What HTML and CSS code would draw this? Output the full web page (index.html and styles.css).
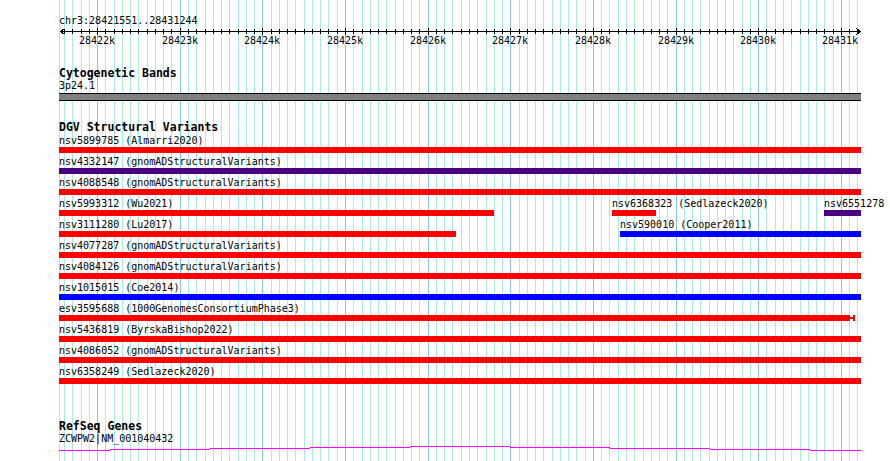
FILE: index.html
```html
<!DOCTYPE html>
<html>
<head>
<meta charset="utf-8">
<title>chr3:28421551..28431244</title>
<link rel="stylesheet" href="styles.css">
</head>
<body>
<div class="browser">

  <!-- guide lines every 100bp, darker every 1kb -->
  <svg class="grid" width="890" height="461">
    <path class="minor" d="M59.5 0V461M64.5 0V461M72.5 0V461M81.5 0V461M89.5 0V461M105.5 0V461M114.5 0V461M122.5 0V461M130.5 0V461M138.5 0V461M147.5 0V461M155.5 0V461M163.5 0V461M171.5 0V461M188.5 0V461M196.5 0V461M205.5 0V461M213.5 0V461M221.5 0V461M229.5 0V461M238.5 0V461M246.5 0V461M254.5 0V461M271.5 0V461M279.5 0V461M287.5 0V461M295.5 0V461M304.5 0V461M312.5 0V461M320.5 0V461M328.5 0V461M337.5 0V461M353.5 0V461M362.5 0V461M370.5 0V461M378.5 0V461M386.5 0V461M395.5 0V461M403.5 0V461M411.5 0V461M419.5 0V461M436.5 0V461M444.5 0V461M452.5 0V461M461.5 0V461M469.5 0V461M477.5 0V461M486.5 0V461M494.5 0V461M502.5 0V461M519.5 0V461M527.5 0V461M535.5 0V461M543.5 0V461M552.5 0V461M560.5 0V461M568.5 0V461M576.5 0V461M585.5 0V461M601.5 0V461M609.5 0V461M618.5 0V461M626.5 0V461M634.5 0V461M643.5 0V461M651.5 0V461M659.5 0V461M667.5 0V461M684.5 0V461M692.5 0V461M700.5 0V461M709.5 0V461M717.5 0V461M725.5 0V461M733.5 0V461M742.5 0V461M750.5 0V461M766.5 0V461M775.5 0V461M783.5 0V461M791.5 0V461M800.5 0V461M808.5 0V461M816.5 0V461M824.5 0V461M833.5 0V461M849.5 0V461M857.5 0V461"/>
    <path class="major" d="M97.5 0V461M180.5 0V461M262.5 0V461M345.5 0V461M428.5 0V461M510.5 0V461M593.5 0V461M676.5 0V461M758.5 0V461M841.5 0V461"/>
  </svg>

  <div class="view">
    <div class="ruler">
      <div class="locus">chr3:28421551..28431244</div>
      <svg class="scale" width="890" height="40">
        <path class="axis" d="M60 4.5H861M64.5 1.5L60.5 4.5L64.5 7.5M856.5 1.5L860.5 4.5L856.5 7.5"/>
        <path class="axis" d="M64.5 2V7M72.5 2V7M81.5 2V7M89.5 2V7M105.5 2V7M114.5 2V7M122.5 2V7M130.5 2V7M138.5 2V7M147.5 2V7M155.5 2V7M163.5 2V7M171.5 2V7M188.5 2V7M196.5 2V7M205.5 2V7M213.5 2V7M221.5 2V7M229.5 2V7M238.5 2V7M246.5 2V7M254.5 2V7M271.5 2V7M279.5 2V7M287.5 2V7M295.5 2V7M304.5 2V7M312.5 2V7M320.5 2V7M328.5 2V7M337.5 2V7M353.5 2V7M362.5 2V7M370.5 2V7M378.5 2V7M386.5 2V7M395.5 2V7M403.5 2V7M411.5 2V7M419.5 2V7M436.5 2V7M444.5 2V7M452.5 2V7M461.5 2V7M469.5 2V7M477.5 2V7M486.5 2V7M494.5 2V7M502.5 2V7M519.5 2V7M527.5 2V7M535.5 2V7M543.5 2V7M552.5 2V7M560.5 2V7M568.5 2V7M576.5 2V7M585.5 2V7M601.5 2V7M609.5 2V7M618.5 2V7M626.5 2V7M634.5 2V7M643.5 2V7M651.5 2V7M659.5 2V7M667.5 2V7M684.5 2V7M692.5 2V7M700.5 2V7M709.5 2V7M717.5 2V7M725.5 2V7M733.5 2V7M742.5 2V7M750.5 2V7M766.5 2V7M775.5 2V7M783.5 2V7M791.5 2V7M800.5 2V7M808.5 2V7M816.5 2V7M824.5 2V7M833.5 2V7M849.5 2V7M857.5 2V7"/>
        <path class="axis" d="M97.5 1V8M180.5 1V8M262.5 1V8M345.5 1V8M428.5 1V8M510.5 1V8M593.5 1V8M676.5 1V8M758.5 1V8M841.5 1V8"/>
        <text x="97" y="17">28422k</text>
        <text x="180" y="17">28423k</text>
        <text x="262" y="17">28424k</text>
        <text x="345" y="17">28425k</text>
        <text x="428" y="17">28426k</text>
        <text x="510" y="17">28427k</text>
        <text x="593" y="17">28428k</text>
        <text x="676" y="17">28429k</text>
        <text x="758" y="17">28430k</text>
        <text x="840" y="17">28431k</text>
      </svg>
    </div>

    <section class="track cyto">
      <h2 class="track-title">Cytogenetic Bands</h2>
      <div class="band-name">3p24.1</div>
      <div class="band"></div>
    </section>

    <section class="track dgv">
      <h2 class="track-title">DGV Structural Variants</h2>
      <div class="rows">
        <div class="row">
          <div class="feature" style="left:59px;width:802px"><span class="name">nsv5899785 (Almarri2020)</span><div class="bar loss"></div></div>
        </div>
        <div class="row">
          <div class="feature" style="left:59px;width:802px"><span class="name">nsv4332147 (gnomADStructuralVariants)</span><div class="bar both"></div></div>
        </div>
        <div class="row">
          <div class="feature" style="left:59px;width:802px"><span class="name">nsv4088548 (gnomADStructuralVariants)</span><div class="bar loss"></div></div>
        </div>
        <div class="row">
          <div class="feature" style="left:59px;width:435px"><span class="name">nsv5993312 (Wu2021)</span><div class="bar loss"></div></div>
          <div class="feature" style="left:612px;width:44px"><span class="name">nsv6368323 (Sedlazeck2020)</span><div class="bar loss"></div></div>
          <div class="feature" style="left:824px;width:37px"><span class="name">nsv6551278</span><div class="bar both"></div></div>
        </div>
        <div class="row">
          <div class="feature" style="left:59px;width:397px"><span class="name">nsv3111280 (Lu2017)</span><div class="bar loss"></div></div>
          <div class="feature" style="left:620px;width:241px"><span class="name">nsv590010 (Cooper2011)</span><div class="bar gain"></div></div>
        </div>
        <div class="row">
          <div class="feature" style="left:59px;width:802px"><span class="name">nsv4077287 (gnomADStructuralVariants)</span><div class="bar loss"></div></div>
        </div>
        <div class="row">
          <div class="feature" style="left:59px;width:802px"><span class="name">nsv4084126 (gnomADStructuralVariants)</span><div class="bar loss"></div></div>
        </div>
        <div class="row">
          <div class="feature" style="left:59px;width:802px"><span class="name">nsv1015015 (Coe2014)</span><div class="bar gain"></div></div>
        </div>
        <div class="row">
          <div class="feature" style="left:59px;width:796px">
            <span class="name">esv3595688 (1000GenomesConsortiumPhase3)</span>
            <div class="ranged">
              <div class="bar loss" style="width:791px"></div>
              <div class="whisker"></div>
              <div class="cap"></div>
            </div>
          </div>
        </div>
        <div class="row">
          <div class="feature" style="left:59px;width:802px"><span class="name">nsv5436819 (ByrskaBishop2022)</span><div class="bar loss"></div></div>
        </div>
        <div class="row">
          <div class="feature" style="left:59px;width:802px"><span class="name">nsv4086052 (gnomADStructuralVariants)</span><div class="bar loss"></div></div>
        </div>
        <div class="row">
          <div class="feature" style="left:59px;width:802px"><span class="name">nsv6358249 (Sedlazeck2020)</span><div class="bar loss"></div></div>
        </div>
      </div>
    </section>

    <section class="track genes">
      <h2 class="track-title">RefSeq Genes</h2>
      <div class="gene">
        <span class="name">ZCWPW2|NM_001040432</span>
        <svg class="gene-line" width="802" height="8">
          <rect x="0" y="5" width="51" height="1"/>
          <rect x="51" y="4" width="100" height="1"/>
          <rect x="151" y="3" width="100" height="1"/>
          <rect x="251" y="2" width="100" height="1"/>
          <rect x="351" y="1" width="100" height="1"/>
          <rect x="451" y="2" width="100" height="1"/>
          <rect x="551" y="3" width="100" height="1"/>
          <rect x="651" y="4" width="100" height="1"/>
          <rect x="751" y="5" width="51" height="1"/>
        </svg>
      </div>
    </section>
  </div>
</div>
</body>
</html>
```

FILE: styles.css
```css
body {
  margin: 0;
  background-color: white;
  font-family: "DejaVu Sans Mono", "Liberation Mono", monospace;
  font-size: 10px;
  color: black;
}

.browser {
  position: relative;
  width: 890px;
  height: 461px;
  overflow: hidden;
}

/* guide lines sit under all the tracks */
.grid {
  position: absolute;
  left: 0;
  top: 0;
}
.grid path {
  fill: none;
  stroke-width: 1;
  shape-rendering: crispEdges;
}
.grid .minor {
  stroke: #a9eaee;
}
.grid .major {
  stroke: #86c4ea;
}

.view {
  position: relative;
  padding-top: 15px;
}

/* ruler */
.locus {
  padding-left: 59px;
  height: 12px;
  line-height: 12px;
  white-space: nowrap;
}
.scale {
  display: block;
}
.scale .axis {
  fill: none;
  stroke: black;
  stroke-width: 1;
  shape-rendering: crispEdges;
}
.scale text {
  font-family: "DejaVu Sans Mono", "Liberation Mono", monospace;
  font-size: 10px;
  text-anchor: middle;
  fill: black;
}

/* tracks */
.track-title {
  margin: 0;
  padding-left: 59px;
  font-size: 11.5px;
  font-weight: bold;
  line-height: 13px;
  white-space: nowrap;
}

.band-name {
  padding-left: 59px;
  line-height: 12px;
}
.band {
  margin: 1px 0 0 59px;
  width: 802px;
  height: 8px;
  box-sizing: border-box;
  border-top: 1px solid black;
  border-bottom: 1px solid black;
  background-color: #808080;
}

.dgv {
  margin-top: 20px;
}
.rows {
  padding-top: 1px;
}
.row {
  position: relative;
  height: 21px;
}
.feature {
  position: absolute;
  top: 0;
}
.name {
  display: block;
  height: 12px;
  line-height: 12px;
  white-space: nowrap;
}
.bar {
  height: 6px;
}
.loss {
  background-color: #ff0000;
}
.gain {
  background-color: #0000ff;
}
.both {
  background-color: #4b0082;
}

.ranged {
  display: flex;
  align-items: center;
  height: 6px;
}
.ranged .bar {
  flex: none;
}
.whisker {
  width: 3px;
  height: 2px;
  background-color: #ff0000;
}
.cap {
  width: 2px;
  height: 6px;
  background-color: #ff0000;
}

.genes {
  margin-top: 33px;
}
.gene {
  margin-left: 59px;
}
.gene-line {
  display: block;
  fill: #ff00ff;
  shape-rendering: crispEdges;
}
```
